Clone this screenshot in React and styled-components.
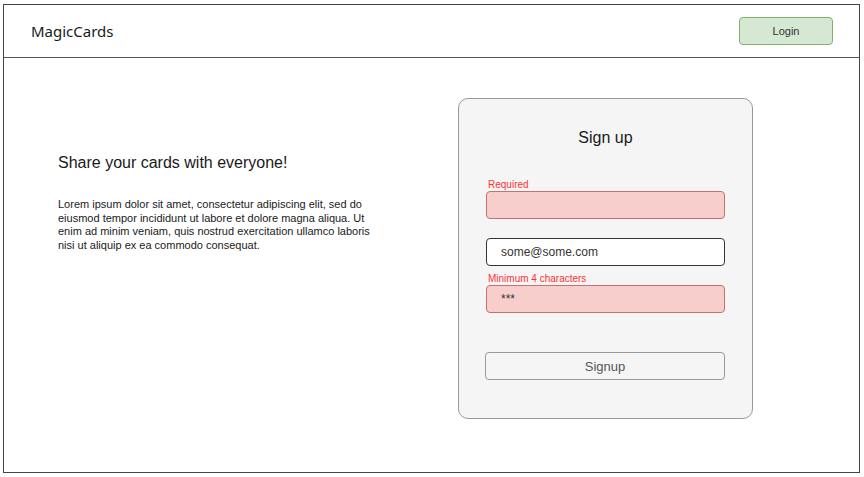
import styled, { createGlobalStyle } from "styled-components";

const Global = createGlobalStyle`
  body {
    margin: 0;
    background: #fff;
    font-family: "Liberation Sans", Arial, sans-serif;
  }
`;

const Frame = styled.div`
  box-sizing: border-box;
  margin: 4px 0 0 3px;
  width: 857px;
  height: 469px;
  border: 1px solid #444;
  display: flex;
  flex-direction: column;
`;

const Header = styled.header`
  box-sizing: border-box;
  height: 53px;
  flex: 0 0 53px;
  border-bottom: 1px solid #555;
  display: flex;
  align-items: center;
  justify-content: space-between;
  padding: 0 26px 0 27px;
`;

const Brand = styled.div`
  font-family: "Noto Sans", "Open Sans", sans-serif;
  font-size: 15px;
  color: #1a1a1a;
  margin-top: -1px;
`;

const LoginButton = styled.button`
  box-sizing: border-box;
  width: 94px;
  height: 28px;
  margin-top: -1px;
  background: #d5e8d4;
  border: 1px solid #82b366;
  border-radius: 4px;
  font-family: "Liberation Sans", Arial, sans-serif;
  font-size: 11px;
  color: #333;
  padding: 0;
`;

const Main = styled.main`
  display: flex;
  padding: 40px 0 0 54px;
`;

const Intro = styled.section`
  width: 316px;
  margin-right: 84px;
  padding-top: 56px;
  color: #1a1a1a;

  h2 {
    margin: 0 0 26px;
    font-size: 16px;
    font-weight: normal;
  }
  p {
    margin: 0;
    font-size: 11px;
    line-height: 13.5px;
  }
`;

const Card = styled.div`
  box-sizing: border-box;
  width: 295px;
  height: 321px;
  background: #f5f5f5;
  border: 1px solid #999;
  border-radius: 10px;
  padding: 29px 27px 0;
  display: flex;
  flex-direction: column;
`;

const CardTitle = styled.h1`
  margin: 0 0 31px;
  font-size: 16px;
  line-height: 20px;
  font-weight: normal;
  text-align: center;
  color: #1a1a1a;
`;

const Field = styled.div`
  display: flex;
  flex-direction: column;
  margin-top: ${(p) => p.$gap || 0}px;
`;

const Hint = styled.span`
  font-size: 10px;
  line-height: 11px;
  margin-bottom: 1px;
  color: #ff3333;
  padding-left: 2px;
`;

const Input = styled.div`
  box-sizing: border-box;
  height: 28px;
  border-radius: 4px;
  border: 1px solid ${(p) => (p.$error ? "#c9706d" : "#333")};
  background: ${(p) => (p.$error ? "#f8cecc" : "#fff")};
  display: flex;
  align-items: center;
  padding-left: 14px;
  font-size: 12px;
  color: #333;
`;

const SubmitButton = styled.button`
  box-sizing: border-box;
  height: 28px;
  margin: 39px 0 0 -1px;
  background: #f5f5f5;
  border: 1px solid #999;
  border-radius: 4px;
  font-family: "Liberation Sans", Arial, sans-serif;
  font-size: 13px;
  color: #555;
`;

export default function App() {
  return (
    <>
      <Global />
      <Frame>
        <Header>
          <Brand>MagicCards</Brand>
          <LoginButton>Login</LoginButton>
        </Header>
        <Main>
          <Intro>
            <h2>Share your cards with everyone!</h2>
            <p>
              Lorem ipsum dolor sit amet, consectetur adipiscing elit, sed do
              eiusmod tempor incididunt ut labore et dolore magna aliqua. Ut
              enim ad minim veniam, quis nostrud exercitation ullamco laboris
              nisi ut aliquip ex ea commodo consequat.
            </p>
          </Intro>
          <Card>
            <CardTitle>Sign up</CardTitle>
            <Field>
              <Hint>Required</Hint>
              <Input $error />
            </Field>
            <Field $gap={19}>
              <Input>some@some.com</Input>
            </Field>
            <Field $gap={7}>
              <Hint>Minimum 4 characters</Hint>
              <Input $error>***</Input>
            </Field>
            <SubmitButton>Signup</SubmitButton>
          </Card>
        </Main>
      </Frame>
    </>
  );
}
